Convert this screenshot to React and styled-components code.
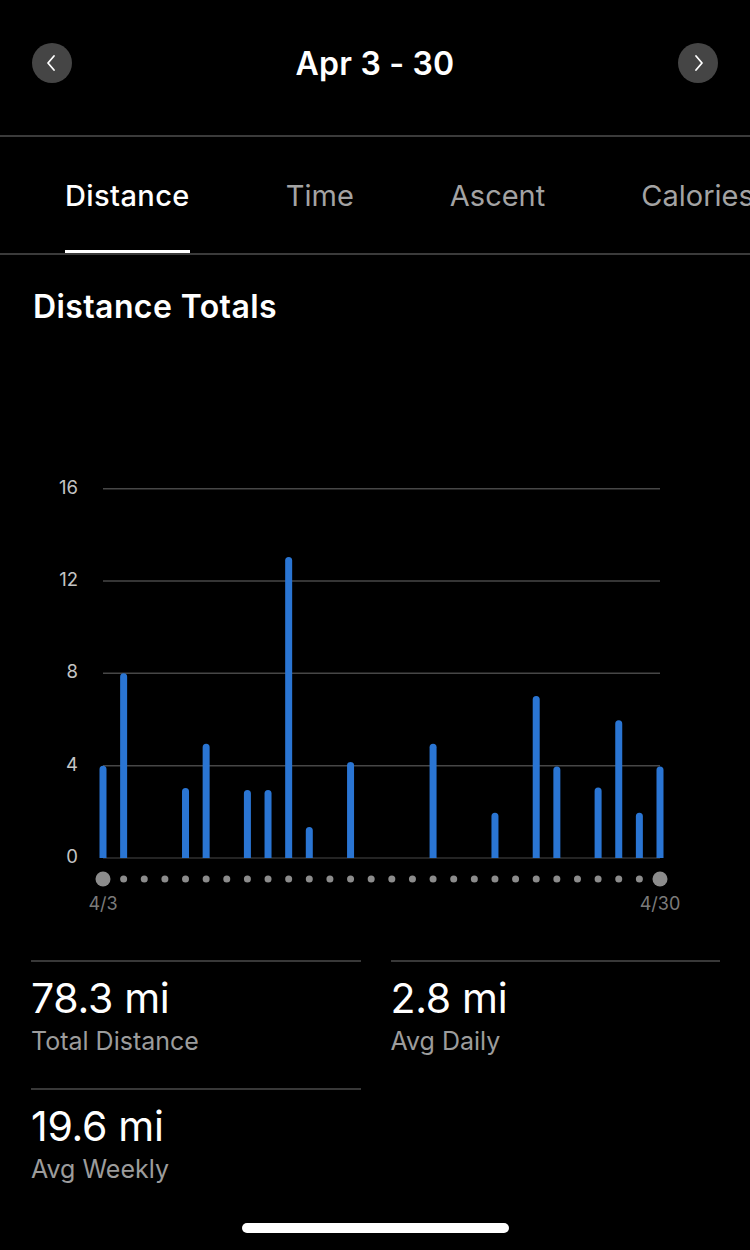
import React from 'react'
import styled, { createGlobalStyle } from 'styled-components'

const GlobalStyle = createGlobalStyle`
  html, body {
    margin: 0;
    padding: 0;
    background: #000;
  }
  body {
    font-family: Inter, "Noto Sans", "Liberation Sans", sans-serif;
    color: #fff;
  }
`

const tabs = ['Distance', 'Time', 'Ascent', 'Calories']

// miles per day, 4/3 .. 4/30
const days = [4, 8, 0, 0, 3.03, 4.95, 0, 2.95, 2.95, 13.04, 1.34, 0, 4.16, 0, 0, 0,
  4.95, 0, 0, 1.96, 0, 7.02, 3.96, 0, 3.05, 5.97, 1.96, 3.96]

const stats = [
  { value: '78.3 mi', label: 'Total Distance' },
  { value: '2.8 mi', label: 'Avg Daily' },
  { value: '19.6 mi', label: 'Avg Weekly' },
]

// chart geometry (svg coords)
const LEFT = 103
const RIGHT = 660
const BASE = 387
const UNIT = 23.08
const STEP = (RIGHT - LEFT) / (days.length - 1)

const Page = styled.div`
  width: 750px;
  min-height: 1250px;
  display: flex;
  flex-direction: column;
  background: #000;
  overflow: hidden;
`

const Header = styled.div`
  height: 137px;
  box-sizing: border-box;
  padding: 0 32px 9px;
  border-bottom: 2px solid #3b3b3b;
  display: flex;
  align-items: center;
  justify-content: space-between;
`

const NavButton = styled.div`
  width: 40px;
  height: 40px;
  border-radius: 50%;
  background: #454545;
  display: flex;
  align-items: center;
  justify-content: center;
`

const Title = styled.div`
  font-size: 32px;
  font-weight: 600;
  letter-spacing: 0.2px;
`

const TabBar = styled.div`
  height: 118px;
  box-sizing: border-box;
  border-bottom: 2px solid #3b3b3b;
  padding-left: 65px;
  display: flex;
  gap: 96px;
  white-space: nowrap;
  overflow: hidden;
`

const Tab = styled.div`
  height: 100%;
  box-sizing: border-box;
  padding-top: 4px;
  display: flex;
  align-items: center;
  font-size: 29px;
  letter-spacing: ${p => (p.active ? '0.4px' : '0')};
  font-weight: ${p => (p.active ? 500 : 400)};
  color: ${p => (p.active ? '#fff' : '#a3a3a3')};
  border-bottom: 3px solid ${p => (p.active ? '#fff' : 'transparent')};
`

const SectionTitle = styled.h2`
  margin: 33px 0 0 33px;
  font-size: 32px;
  line-height: 37px;
  font-weight: 600;
  letter-spacing: 0.4px;
`

const Chart = styled.svg`
  display: block;
  margin-top: 146px;
`

const StatsGrid = styled.div`
  margin-top: 39px;
  padding: 0 30px 0 31px;
  display: grid;
  grid-template-columns: 1fr 1fr;
  column-gap: 30px;
`

const Stat = styled.div`
  border-top: 2px solid #383838;
  padding: 12px 0 32px;
`

const StatValue = styled.div`
  font-size: 41px;
  line-height: 48px;
  font-weight: 400;
  letter-spacing: -0.3px;
`

const StatLabel = styled.div`
  margin-top: 4px;
  font-size: 25px;
  line-height: 30px;
  color: #9c9c9c;
`

const HomeBar = styled.div`
  margin: auto auto 17px;
  width: 267px;
  height: 10px;
  border-radius: 5px;
  background: #fff;
`

function Chevron({ dir }) {
  const pts = dir === 'left' ? '12,4 6,11 12,18' : '8,4 14,11 8,18'
  return (
    <svg width="20" height="22" viewBox="0 0 20 22">
      <polyline points={pts} fill="none" stroke="#fff" strokeWidth="1.8" strokeLinecap="round" strokeLinejoin="round" />
    </svg>
  )
}

function bar(x, h) {
  const top = BASE - h * UNIT
  const r = 3.5
  return `M${x - r} ${BASE} V${top + r} A${r} ${r} 0 0 1 ${x + r} ${top + r} V${BASE} Z`
}

function DistanceChart() {
  return (
    <Chart width="750" height="450" viewBox="0 0 750 450">
      {[0, 4, 8, 12, 16].map(v => {
        const y = BASE - v * UNIT
        return (
          <g key={v}>
            <line x1={LEFT} x2={RIGHT} y1={y} y2={y} stroke={v === 0 ? '#303030' : '#474747'} strokeWidth="1.5" />
            <text x="78" y={y} textAnchor="end" dominantBaseline="middle" fill="#c4c4c4" fontSize="18.5" fontFamily="Inter, sans-serif">{v}</text>
          </g>
        )
      })}
      {days.map((d, i) => d > 0 && (
        <path key={'b' + i} d={bar(LEFT + i * STEP, d)} fill="#2a75d3" />
      ))}
      {days.map((d, i) => {
        const end = i === 0 || i === days.length - 1
        return <circle key={'d' + i} cx={LEFT + i * STEP} cy="408" r={end ? 7.5 : 3.5} fill="#8c8c8c" />
      })}
      <text x={LEFT} y="434" textAnchor="middle" dominantBaseline="middle" fill="#7b7b7b" fontSize="18" fontFamily="Inter, sans-serif">4/3</text>
      <text x={RIGHT} y="434" textAnchor="middle" dominantBaseline="middle" fill="#7b7b7b" fontSize="18" fontFamily="Inter, sans-serif">4/30</text>
    </Chart>
  )
}

export default function App() {
  return (
    <>
      <GlobalStyle />
      <Page>
        <Header>
          <NavButton><Chevron dir="left" /></NavButton>
          <Title>Apr 3 - 30</Title>
          <NavButton><Chevron dir="right" /></NavButton>
        </Header>
        <TabBar>
          {tabs.map((t, i) => (
            <Tab key={t} active={i === 0}>{t}</Tab>
          ))}
        </TabBar>
        <SectionTitle>Distance Totals</SectionTitle>
        <DistanceChart />
        <StatsGrid>
          {stats.map(s => (
            <Stat key={s.label}>
              <StatValue>{s.value}</StatValue>
              <StatLabel>{s.label}</StatLabel>
            </Stat>
          ))}
        </StatsGrid>
        <HomeBar />
      </Page>
    </>
  )
}
